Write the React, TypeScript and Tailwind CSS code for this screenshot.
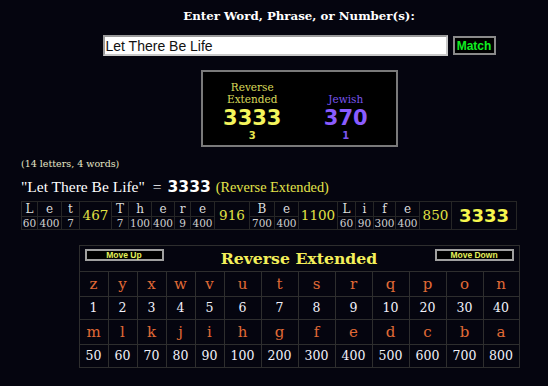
import React from "react";

type Cell = { top: string; bottom?: number; total?: boolean; final?: boolean };

const cells: Cell[] = [
  { top: "L", bottom: 60 },
  { top: "e", bottom: 400 },
  { top: "t", bottom: 7 },
  { top: "467", total: true },
  { top: "T", bottom: 7 },
  { top: "h", bottom: 100 },
  { top: "e", bottom: 400 },
  { top: "r", bottom: 9 },
  { top: "e", bottom: 400 },
  { top: "916", total: true },
  { top: "B", bottom: 700 },
  { top: "e", bottom: 400 },
  { top: "1100", total: true },
  { top: "L", bottom: 60 },
  { top: "i", bottom: 90 },
  { top: "f", bottom: 300 },
  { top: "e", bottom: 400 },
  { top: "850", total: true },
  { top: "3333", final: true },
];

const row1 = ["z", "y", "x", "w", "v", "u", "t", "s", "r", "q", "p", "o", "n"];
const row2 = [1, 2, 3, 4, 5, 6, 7, 8, 9, 10, 20, 30, 40];
const row3 = ["m", "l", "k", "j", "i", "h", "g", "f", "e", "d", "c", "b", "a"];
const row4 = [50, 60, 70, 80, 90, 100, 200, 300, 400, 500, 600, 700, 800];

const BG = "bg-[#05050f]";

function SmallButton({ label }: { label: string }) {
  return (
    <div className="w-[79px] h-[12px] border-2 border-[#a0a0a0] bg-black flex items-center justify-center">
      <span className="text-[8.5px] leading-none font-bold text-[#e4f05a] [font-family:'Liberation_Sans',Arial,sans-serif]">
        {label}
      </span>
    </div>
  );
}

export default function App() {
  return (
    <div className="w-[548px] h-[386px] bg-[#05050f] overflow-hidden [font-family:'DejaVu_Serif',serif]">
      {/* top centered section */}
      <div className="pl-[50px] flex flex-col items-center">
        <div className="mt-[8px] h-[16px] text-[11.8px] leading-[16px] font-bold text-white">
          Enter Word, Phrase, or Number(s):
        </div>
        <div className="mt-[11px] flex items-center gap-[5px]">
          <div className="w-[345px] h-[21px] bg-white border-2 border-[#c8c8c8] border-t-[#9a9a9a] border-l-[#9a9a9a] flex items-center pl-[1px]">
            <span className="text-[14px] leading-none text-[#111] [font-family:'Liberation_Sans',Arial,sans-serif]">
              Let There Be Life
            </span>
          </div>
          <div className="w-[43px] h-[19px] bg-black border-2 border-[#8a8a8a] flex items-center justify-center">
            <span className="text-[12px] leading-none font-bold text-[#11ee22] [font-family:'Liberation_Sans',Arial,sans-serif]">
              Match
            </span>
          </div>
        </div>
        <div className="mt-[14px] w-[197px] h-[77px] bg-black border-2 border-[#7a7a7a] grid grid-cols-2 px-[3px]">
          <div className="flex flex-col items-center justify-end pb-[3px]">
            <div className="text-[10.5px] leading-[12px] text-[#dada5a] text-center">
              Reverse
              <br />
              Extended
            </div>
            <div className="mt-[1px] text-[21px] leading-[24px] font-bold text-[#f4f45c] [font-family:'DejaVu_Sans',sans-serif]">
              3333
            </div>
            <div className="text-[10px] leading-[12px] font-bold text-[#e8e850] [font-family:'DejaVu_Sans',sans-serif]">
              3
            </div>
          </div>
          <div className="flex flex-col items-center justify-end pb-[3px]">
            <div className="text-[10.5px] leading-[12px] text-[#7a55f0]">Jewish</div>
            <div className="mt-[1px] text-[21px] leading-[24px] font-bold text-[#8a5cff] [font-family:'DejaVu_Sans',sans-serif]">
              370
            </div>
            <div className="text-[10px] leading-[12px] font-bold text-[#7a55f0] [font-family:'DejaVu_Sans',sans-serif]">
              1
            </div>
          </div>
        </div>
      </div>

      {/* summary */}
      <div className="pl-[21px]">
        <div className="mt-[10px] text-[9.5px] leading-[14px] text-[#e6e6c8]">
          (14 letters, 4 words)
        </div>
        <div className="mt-[7px] flex items-baseline h-[18px] leading-[18px] text-white">
          <span className="text-[15.5px] [font-family:'Liberation_Serif',serif]">"Let There Be Life"</span>
          <span className="ml-[8px] text-[15.5px] [font-family:'Liberation_Serif',serif]">=</span>
          <span className="ml-[6px] text-[15.5px] font-bold [font-family:'DejaVu_Sans',sans-serif]">3333</span>
          <span className="ml-[5px] text-[14.3px] text-[#e4e44a] [font-family:'Liberation_Serif',serif]">
            (Reverse Extended)
          </span>
        </div>
        <div className="mt-[5px] w-fit bg-[#262626] border border-[#262626] grid grid-cols-[15px_23px_17px_31px_16px_22px_22px_15px_23px_34px_24px_23px_38px_17px_17px_21px_23px_31px_64px] grid-rows-[14px_12px] gap-px">
          {cells.map((c, i) =>
            c.final ? (
              <div
                key={i}
                className={`row-span-2 ${BG} flex items-center justify-center text-[18px] font-bold text-[#f6f64e] [font-family:'DejaVu_Sans',sans-serif]`}
              >
                {c.top}
              </div>
            ) : c.total ? (
              <div
                key={i}
                className={`row-span-2 ${BG} flex items-center justify-center text-[13.5px] text-[#e2e244]`}
              >
                {c.top}
              </div>
            ) : (
              <div
                key={i}
                className={`${BG} flex items-center justify-center text-[12px] leading-none text-[#dcdcdc]`}
              >
                {c.top}
              </div>
            )
          )}
          {cells
            .filter((c) => c.bottom !== undefined)
            .map((c, i) => (
              <div
                key={"n" + i}
                className={`${BG} flex items-center justify-center text-[10.5px] leading-none text-[#cfcfcf]`}
              >
                {c.bottom}
              </div>
            ))}
        </div>
      </div>

      {/* cipher table */}
      <div className="pl-[50px] flex justify-center mt-[15px]">
        <div className="bg-[#2e2e2e] border border-[#2e2e2e] grid grid-cols-[28px_28px_28px_28px_28px_36px_36px_36px_36px_36px_36px_36px_35px] gap-px">
          <div className={`col-span-13 h-[25px] ${BG} flex items-start justify-between px-[5px] pt-[3px] relative`}>
            <SmallButton label="Move Up" />
            <span className="absolute left-0 right-0 top-[3px] text-center text-[15.7px] leading-[20px] font-bold text-[#f4f05a] [font-family:'DejaVu_Serif',serif]">
              Reverse Extended
            </span>
            <SmallButton label="Move Down" />
          </div>
          {row1.map((c) => (
            <div key={"a" + c} className={`h-[24px] ${BG} flex items-center justify-center text-[15px] text-[#e06a36]`}>
              {c}
            </div>
          ))}
          {row2.map((n) => (
            <div key={"b" + n} className={`h-[22px] ${BG} flex items-center justify-center text-[12.5px] text-[#f2f2fa]`}>
              {n}
            </div>
          ))}
          {row3.map((c) => (
            <div key={"c" + c} className={`h-[24px] ${BG} flex items-center justify-center text-[15px] text-[#e06a36]`}>
              {c}
            </div>
          ))}
          {row4.map((n) => (
            <div key={"d" + n} className={`h-[22px] ${BG} flex items-center justify-center text-[12.5px] text-[#f2f2fa]`}>
              {n}
            </div>
          ))}
        </div>
      </div>
    </div>
  );
}
